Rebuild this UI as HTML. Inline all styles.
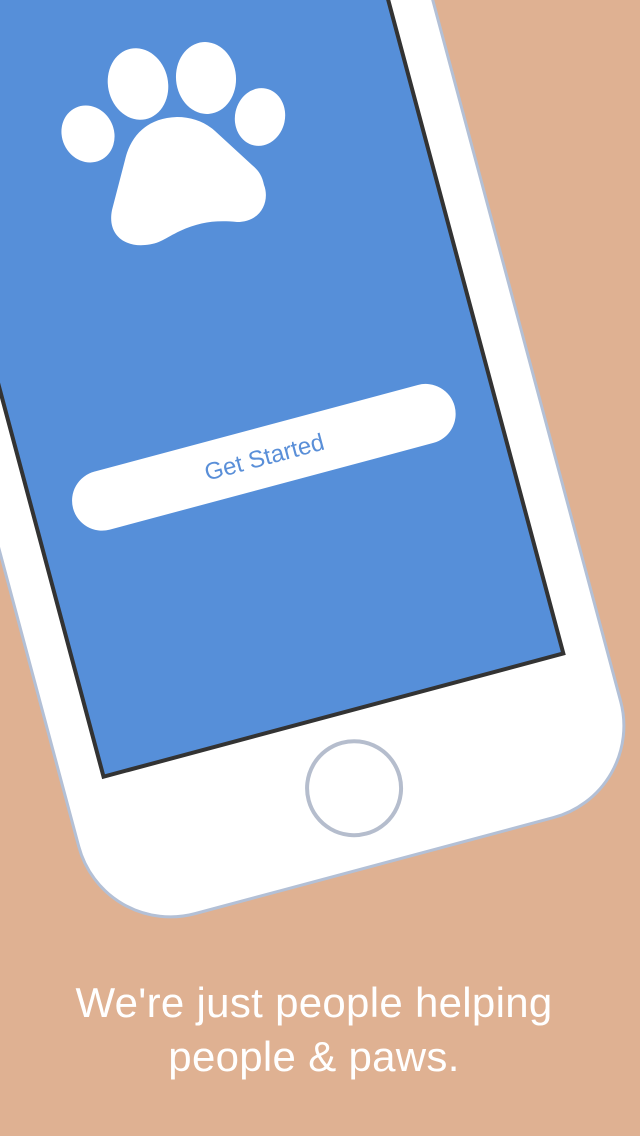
<!DOCTYPE html>
<html><head><meta charset="utf-8"><style>
html,body{margin:0;padding:0;}
body{width:640px;height:1136px;background:#dfb192;overflow:hidden;position:relative;font-family:"Liberation Sans",sans-serif;}
svg{position:absolute;left:0;top:0;}
.t{position:absolute;left:0;width:628px;text-align:center;color:#fff;font-size:42px;line-height:54px;letter-spacing:0.3px;}
</style></head><body>
<svg width="640" height="1136" viewBox="0 0 640 1136">
  <g transform="rotate(-15)">
    <rect x="-143" y="-400" width="561" height="1333" rx="95" fill="#fff" stroke="#b3c0d6" stroke-width="3"/>
    <rect x="-101" y="-400" width="476" height="1177" fill="#568fd9" stroke="#333" stroke-width="4"/>
    <circle cx="138" cy="853" r="47" fill="none" stroke="#b5bdcd" stroke-width="4"/>
    <rect x="-61" y="480" width="395" height="60" rx="30" fill="#fff"/>
    <text x="137" y="518" text-anchor="middle" font-family="Liberation Sans, sans-serif" font-size="24" fill="#5a8fd8">Get Started</text>
  </g>
  <g fill="#fff">
    <ellipse cx="88" cy="134" rx="26" ry="29" transform="rotate(-25 88 134)"/>
    <ellipse cx="138" cy="84" rx="30" ry="36" transform="rotate(-12 138 84)"/>
    <ellipse cx="206" cy="78" rx="30" ry="36" transform="rotate(-5 206 78)"/>
    <ellipse cx="260" cy="117" rx="25" ry="29" transform="rotate(12 260 117)"/>
    <path d="M177,117 C145,118 130,138 125,160 L112,210 C107,235 125,247 145,245 C160,244 165,238 180,231 C200,222 215,220 237,222 C262,222 270,200 264,185 C262,175 258,170 252,165 L215,131 C205,122 192,117 177,117 Z"/>
  </g>
</svg>
<div class="t" style="top:976px">We're just people helping</div>
<div class="t" style="top:1030px">people &amp; paws.</div>
</body></html>
